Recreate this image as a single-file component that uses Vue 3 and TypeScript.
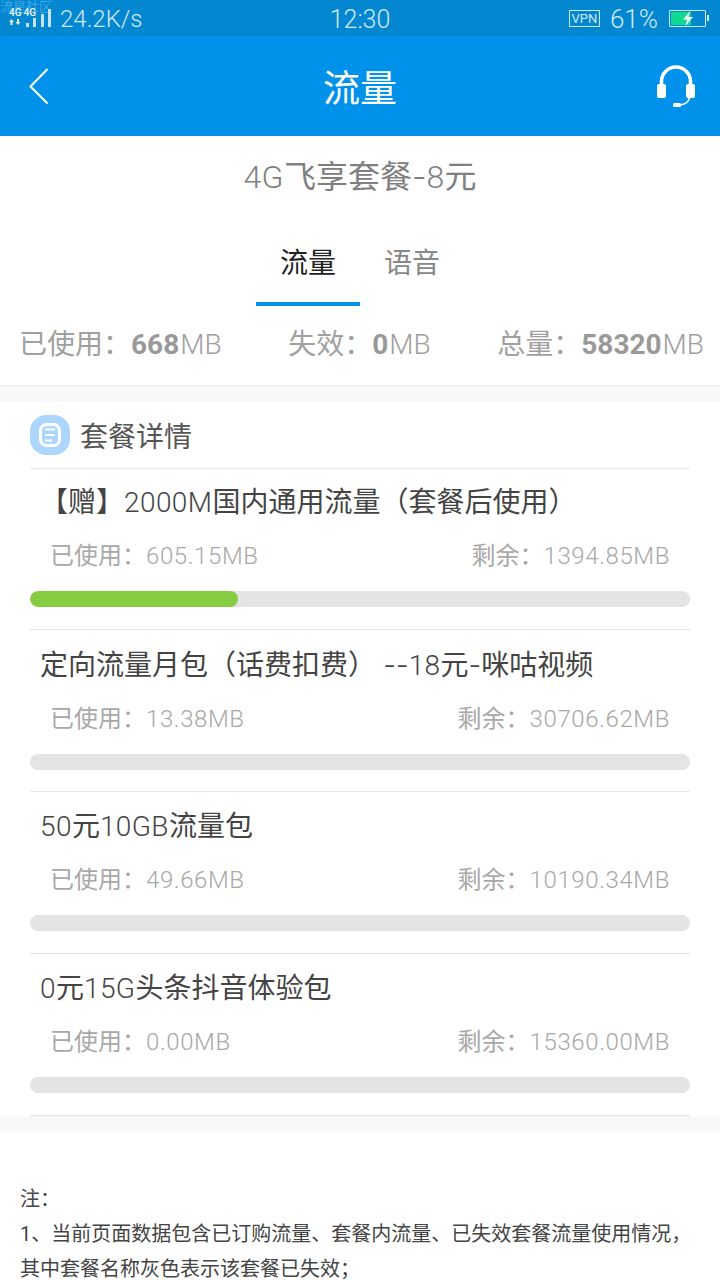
<template>
  <div class="page">
    <!-- Status bar -->
    <div class="status-bar">
      <span class="watermark">流星社区</span>
      <div class="status-left">
        <div class="net">
          <svg width="44" height="36" viewBox="0 0 44 36">
            <path d="M2.500 19 5 22H3.500v3h-2v-3H0zM8 19h2v3h1.500L9 25 6.500 22H8z" fill="#e6f5fd" />
            <path d="M17 23h3v4h-3zM24 18h3v9h-3zM32 14h3v13h-3zM39 9h3v18h-3z" fill="#c4e4f6" />
          </svg>
          <div class="sim-labels"><span>4G</span><span>4G</span></div>
        </div>
        <span class="speed">24.2K/s</span>
      </div>
      <span class="clock">12:30</span>
      <div class="status-right">
        <span class="vpn">VPN</span>
        <span class="percent">61%</span>
        <div class="battery">
          <div class="battery-fill" />
          <svg class="bolt" width="10" height="15" viewBox="0 0 10 15">
            <path d="M7 0 0 8.500h4L2.500 15 10 6H5.500z" fill="#eafff6" />
          </svg>
        </div>
        <i class="battery-cap" />
      </div>
    </div>

    <!-- Title bar -->
    <header class="nav-bar">
      <svg class="back" width="20" height="37" viewBox="0 0 20 37">
        <path d="M18.500 1 1.500 18.500l17 17" fill="none" stroke="#fff" stroke-width="2" />
      </svg>
      <h1 class="nav-title">流量</h1>
      <svg class="service" width="38" height="42" viewBox="0 0 38 42">
        <path d="M4.500 20v-3.500a14.500 14.500 0 0 1 29 0V20" fill="none" stroke="#fff" stroke-width="3.500" />
        <rect x="0" y="19" width="9" height="14" rx="2" fill="#fff" />
        <rect x="29" y="19" width="9" height="14" rx="2" fill="#fff" />
        <path d="M32.500 33c-1 4.500-5 6.500-10 7" fill="none" stroke="#fff" stroke-width="1.500" />
        <rect x="16" y="38" width="8" height="4" rx="1.500" fill="#fff" />
      </svg>
    </header>

    <h2 class="plan-name">
      <span v-for="(r, i) in runs(planName)" :key="i" :class="r.kind">{{ r.text }}</span>
    </h2>

    <div class="tabs">
      <div class="tab active">流量</div>
      <div class="tab">语音</div>
    </div>

    <div class="totals">
      <span v-for="t in totals" :key="t.label">{{ t.label }}：<b>{{ t.value }}</b><span class="lat">MB</span></span>
    </div>

    <div class="gap" />

    <!-- Plan details -->
    <section class="details">
      <div class="details-head">
        <span class="details-icon">
          <svg width="22" height="24" viewBox="0 0 22 24">
            <rect x="1.500" y="1.500" width="19" height="21" rx="6" fill="none" stroke="#fff" stroke-width="3" />
            <path d="M6 6.500h10M6 12h10M6 17.500h7" stroke="#fff" stroke-width="2" />
          </svg>
        </span>
        <span>套餐详情</span>
      </div>
      <div v-for="p in packages" :key="p.name" class="package">
        <div class="package-name">
          <span v-for="(r, i) in runs(p.name)" :key="i" :class="r.kind">{{ r.text }}</span>
        </div>
        <div class="package-usage">
          <span>已使用：<span class="lat num">{{ p.used }}MB</span></span>
          <span>剩余：<span class="lat num">{{ p.left }}MB</span></span>
        </div>
        <div class="progress">
          <div class="progress-bar" :style="{ width: p.percent + '%' }" />
        </div>
      </div>
    </section>

    <div class="gap" />

    <div class="notes">
      <p>注：</p>
      <p>1、当前页面数据包含已订购流量、套餐内流量、已失效套餐流量使用情况，其中套餐名称灰色表示该套餐已失效；</p>
    </div>
  </div>
</template>

<script setup lang="ts">
interface Total {
  label: string;
  value: string;
}

interface DataPackage {
  name: string;
  used: string;
  left: string;
  percent: number;
}

interface TextRun {
  text: string;
  kind: string;
}

const planName = '4G飞享套餐-8元';

const totals: Total[] = [
  { label: '已使用', value: '668' },
  { label: '失效', value: '0' },
  { label: '总量', value: '58320' },
];

const packages: DataPackage[] = [
  { name: '【赠】2000M国内通用流量（套餐后使用）', used: '605.15', left: '1394.85', percent: 31.5 },
  { name: '定向流量月包（话费扣费） --18元-咪咕视频', used: '13.38', left: '30706.62', percent: 0 },
  { name: '50元10GB流量包', used: '49.66', left: '10190.34', percent: 0 },
  { name: '0元15G头条抖音体验包', used: '0.00', left: '15360.00', percent: 0 },
];

// latin runs are set lighter than the chinese, and hyphens are wider
const runs = (text: string): TextRun[] =>
  text
    .split(/(-|[ -~]+?(?=-|[^ -~]|$))/)
    .filter(Boolean)
    .map((part) => ({
      text: part,
      kind: part === '-' ? 'dash' : /^[ -~]+$/.test(part) ? 'lat' : '',
    }));
</script>

<style>
html,
body {
  margin: 0;
  background: #fff;
}
</style>

<style scoped>
.page {
  width: 720px;
  height: 1280px;
  overflow: hidden;
  background: #fff;
  font-family: "Roboto", "Noto Sans CJK SC", sans-serif;
  font-weight: 400;
}

.lat {
  font-weight: 300;
}

.dash {
  font-family: "Inter", sans-serif;
  font-weight: 300;
}

.status-bar {
  position: relative;
  display: flex;
  align-items: center;
  justify-content: space-between;
  height: 36px;
  padding: 0 11px 0 9px;
  box-sizing: border-box;
  background: #0387d1;
  color: #cfe9f8;
}

.watermark {
  position: absolute;
  left: 0;
  top: 0;
  font-size: 13px;
  line-height: 13px;
  color: #3ea6e8;
}

.status-left,
.status-right {
  display: flex;
  align-items: center;
}

.status-left {
  width: 272px;
}

.status-right {
  width: 270px;
  justify-content: flex-end;
}

.net {
  position: relative;
  width: 44px;
  height: 36px;
}

.net svg {
  display: block;
}

.sim-labels {
  position: absolute;
  left: 0;
  top: 7px;
  display: flex;
  gap: 2px;
  font-size: 10px;
  font-weight: 500;
  line-height: 12px;
  color: #f2fafe;
}

.speed {
  margin-left: 7px;
  padding-top: 2px;
  font-size: 24px;
  font-weight: 300;
}

.clock {
  padding-top: 2px;
  font-size: 25px;
  font-weight: 300;
}

.vpn {
  width: 29px;
  height: 15px;
  border: 1px solid #cfe9f8;
  font-size: 13px;
  line-height: 15px;
  text-align: center;
}

.percent {
  margin-left: 10px;
  padding-top: 2px;
  font-size: 26px;
  font-weight: 300;
}

.battery {
  position: relative;
  width: 35px;
  height: 15px;
  margin-left: 11px;
  border: 1px solid #cfe9f8;
  border-radius: 1px;
}

.battery-fill {
  width: 20px;
  height: 13px;
  margin: 1px;
  background: #0fd990;
}

.bolt {
  position: absolute;
  left: 13px;
  top: 0;
}

.battery-cap {
  width: 2px;
  height: 6px;
  margin-left: 1px;
  background: #cfe9f8;
}

.nav-bar {
  display: grid;
  grid-template-columns: 1fr auto 1fr;
  align-items: center;
  height: 100px;
  padding: 0 25px;
  background: #0091ea;
}

.back {
  margin-left: 4px;
}

.service {
  justify-self: end;
}

.nav-title {
  margin: 0;
  font-size: 37px;
  font-weight: 400;
  color: #fff;
}

.plan-name {
  margin: 0;
  padding-top: 20px;
  font-size: 32px;
  line-height: 42px;
  font-weight: 400;
  text-align: center;
  color: #808080;
}

.plan-name .lat,
.package-name .lat {
  letter-spacing: 0.4px;
}

.tabs {
  display: flex;
  justify-content: center;
  margin-top: 42px;
}

.tab {
  width: 104px;
  height: 66px;
  box-sizing: border-box;
  padding-top: 5px;
  font-size: 28px;
  line-height: 38px;
  text-align: center;
  color: #888;
}

.tab.active {
  border-bottom: 4px solid #0091ea;
  color: #222;
}

.totals {
  display: flex;
  justify-content: space-between;
  height: 80px;
  padding: 19px 16px 0 19px;
  box-sizing: border-box;
  border-bottom: 1px solid #e8e8e8;
  font-size: 28px;
  line-height: 40px;
  color: #a0a0a0;
}

.totals b {
  margin-right: 1px;
  font-weight: 700;
  color: #999;
}

.gap {
  height: 16px;
  background: #f8f8f8;
}

.details {
  padding: 0 30px;
}

.details-head {
  display: flex;
  align-items: center;
  gap: 10px;
  height: 66px;
  font-size: 28px;
  color: #555;
}

.details-icon {
  display: flex;
  align-items: center;
  justify-content: center;
  width: 40px;
  height: 40px;
  border-radius: 16px;
  background: #add6ff;
}

.package {
  height: 162px;
  padding-top: 16px;
  box-sizing: border-box;
  border-top: 1px solid #e4e4e4;
}

/* the first row sits a pixel tighter than the others */
.package:nth-child(2) {
  height: 161px;
  padding-top: 15px;
}

.package:last-child {
  height: 163px;
  border-bottom: 1px solid #e4e4e4;
}

.package-name {
  padding-left: 10px;
  font-size: 28px;
  line-height: 38px;
  color: #444;
  white-space: pre;
}

.package-usage {
  display: flex;
  justify-content: space-between;
  margin-top: 17px;
  padding: 0 20px;
  font-size: 24px;
  line-height: 34px;
  color: #a8a8a8;
}

.num {
  letter-spacing: 0.6px;
}

.progress {
  height: 16px;
  margin-top: 18px;
  border-radius: 8px;
  background: #e4e4e4;
  overflow: hidden;
}

.progress-bar {
  height: 100%;
  border-radius: 8px;
  background: #86cc41;
}

.notes {
  padding: 50px 20px 0;
  font-size: 20px;
  line-height: 35px;
  color: #444;
}

.notes p {
  margin: 0;
}
</style>
